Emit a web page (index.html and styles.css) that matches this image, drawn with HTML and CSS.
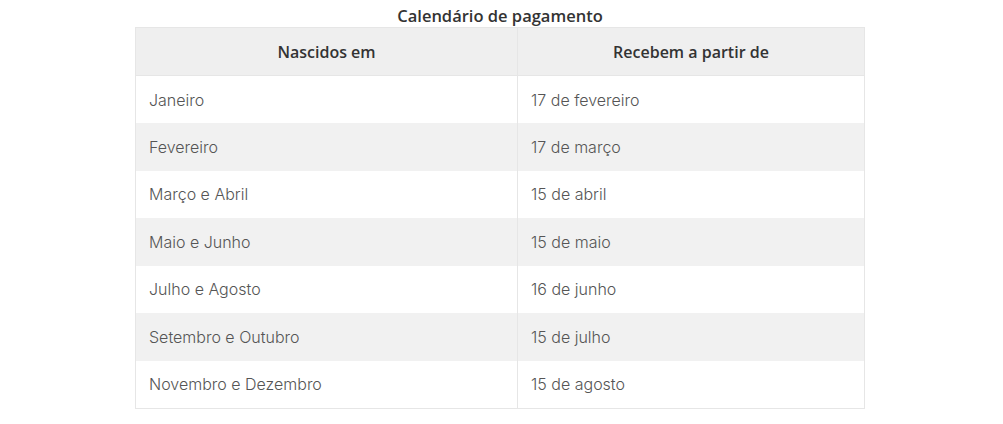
FILE: index.html
```html
<!DOCTYPE html>
<html lang="pt-BR">
  <head>
    <meta charset="UTF-8" />
    <meta name="viewport" content="width=device-width, initial-scale=1.0" />
    <title>Calendário de pagamento</title>
    <link rel="stylesheet" href="styles.css">
  </head>
  <body>
    <div class="wrap">
      <h2 class="caption">Calendário de pagamento</h2>
      <table class="calendar">
        <thead>
          <tr>
            <th>Nascidos em</th>
            <th>Recebem a partir de</th>
          </tr>
        </thead>
        <tbody>
          <tr><td>Janeiro</td><td>17 de fevereiro</td></tr>
          <tr><td>Fevereiro</td><td>17 de março</td></tr>
          <tr><td>Março e Abril</td><td>15 de abril</td></tr>
          <tr><td>Maio e Junho</td><td>15 de maio</td></tr>
          <tr><td>Julho e Agosto</td><td>16 de junho</td></tr>
          <tr><td>Setembro e Outubro</td><td>15 de julho</td></tr>
          <tr><td>Novembro e Dezembro</td><td>15 de agosto</td></tr>
        </tbody>
      </table>
    </div>
  </body>
</html>
```

FILE: styles.css
```css
* {
  margin: 0;
  padding: 0;
  box-sizing: border-box;
}
body {
  background: #fff;
  font-family: "Open Sans", sans-serif;
}
.wrap {
  width: 730px;
  margin-left: 135px;
}
.caption {
  text-align: center;
  font-size: 16.5px;
  font-weight: 600;
  color: #333;
  line-height: 22px;
  padding-top: 5px;
}
.calendar {
  width: 730px;
  border-collapse: collapse;
  border: 1px solid #e6e6e6;
}
.calendar th {
  height: 48px;
  background: #efefef;
  font-size: 16px;
  font-weight: 600;
  color: #333;
  text-align: center;
  border: 1px solid #e6e6e6;
}
.calendar td {
  height: 47.5px;
  padding-left: 13px;
  font-family: "Inter", sans-serif;
  font-size: 16px;
  font-weight: 300;
  color: #555;
  border: 1px solid #e6e6e6;
  border-top: none;
  border-bottom: none;
}
.calendar th:first-child,
.calendar td:first-child {
  width: 382px;
}
.calendar tbody tr:nth-child(even) td {
  background: #f1f1f1;
}
```
